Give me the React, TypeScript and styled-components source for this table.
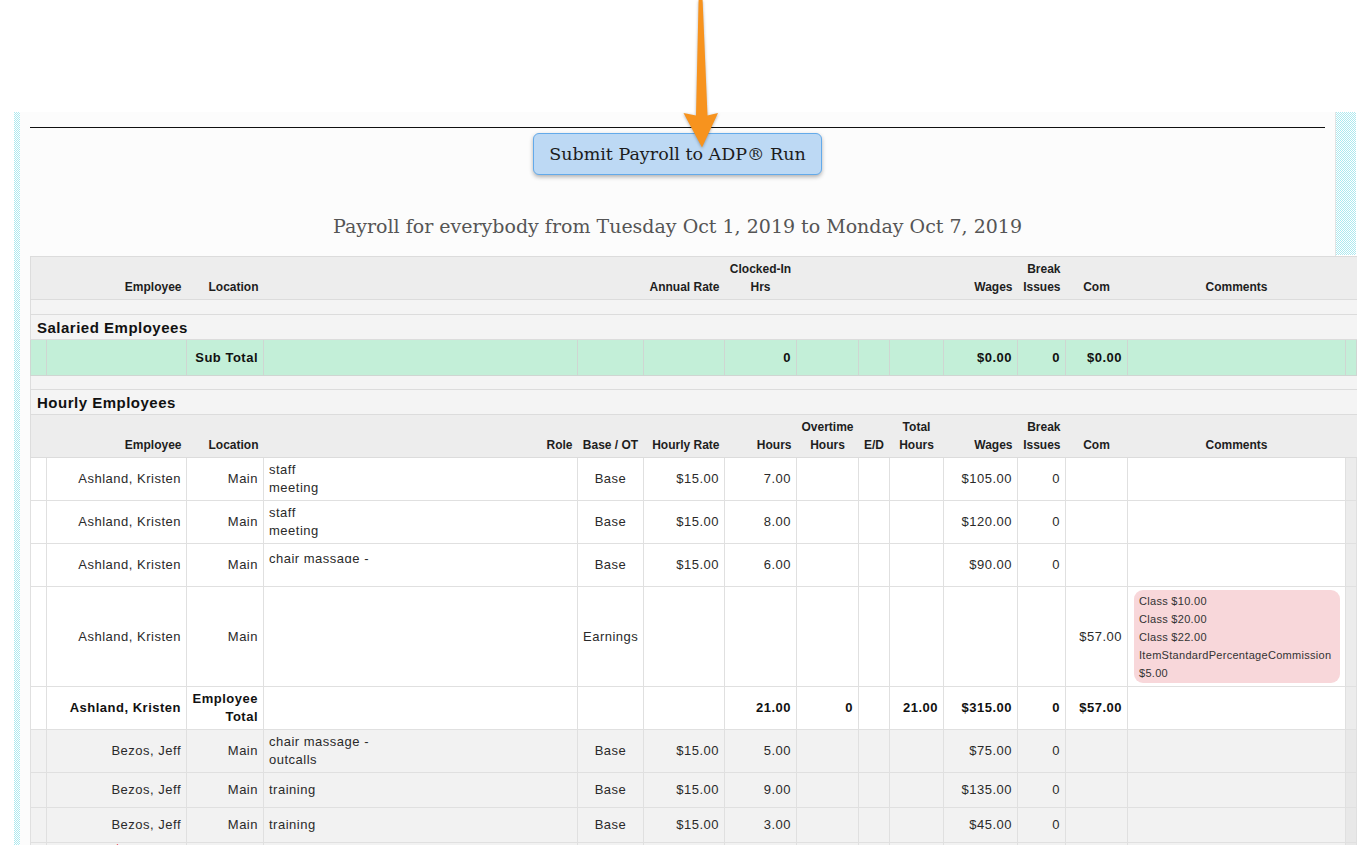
import React from 'react';
import styled, { createGlobalStyle } from 'styled-components';

const GlobalStyle = createGlobalStyle`
  html, body { margin: 0; padding: 0; background: #fff; }
  body { font-family: "Liberation Sans", Arial, sans-serif; color: #222; }
`;

const Page = styled.div`
  position: relative;
  width: 1371px;
  height: 865px;
  overflow: hidden;
  background: #fff;
`;

const TopSpace = styled.div`
  height: 112px;
`;

const ArrowMark = styled.svg`
  position: absolute;
  left: 683px;
  top: 0;
  filter: drop-shadow(0 1px 1.5px rgba(0, 0, 0, 0.3));
  z-index: 2;
`;

const Frame = styled.div`
  display: flex;
  align-items: flex-start;
  height: 733px;
  overflow: hidden;
  padding-left: 14px;
`;

const StripSvg = styled.svg`
  display: block;
  flex: none;
  shape-rendering: crispEdges;
`;

const DotStrip = ({ id, w, h }: { id: string; w: number; h: number }) => (
  <StripSvg width={w} height={h}>
    <defs>
      <pattern id={id} width="2" height="2" patternUnits="userSpaceOnUse">
        <rect x="0" y="0" width="2" height="2" fill="#ffffff" />
        <rect x="0" y="0" width="1" height="1" fill="#ade9ef" />
        <rect x="1" y="1" width="1" height="1" fill="#ade9ef" />
      </pattern>
    </defs>
    <rect x="0" y="0" width={w} height={h} fill={`url(#${id})`} />
  </StripSvg>
);

const Panel = styled.div`
  width: 1316px;
  flex: none;
  align-self: stretch;
  box-sizing: border-box;
  background: #fcfcfc;
  border-right: 1px solid #e4e4e4;
  padding: 15px 10px 0;
`;

const Rule = styled.div`
  height: 1px;
  background: #111;
`;

const ButtonRow = styled.div`
  display: flex;
  justify-content: center;
  margin-top: 5px;
`;

const SubmitButton = styled.button`
  width: 289px;
  height: 42px;
  box-sizing: border-box;
  background: #bdd9f4;
  border: 1px solid #63aaea;
  border-radius: 6px;
  box-shadow: 0 2px 4px rgba(0, 0, 0, 0.3);
  font-family: "DejaVu Serif", "Liberation Serif", serif;
  font-size: 17.5px;
  color: #1c1c1c;
  padding: 0;
  cursor: pointer;
`;

const Title = styled.h2`
  margin: 40px 0 19px;
  text-align: center;
  font-family: "DejaVu Serif", "Liberation Serif", serif;
  font-weight: 400;
  font-size: 19px;
  line-height: 22px;
  color: #555;
`;

const Table = styled.table`
  width: 1326px;
  table-layout: fixed;
  border-collapse: collapse;
  border-left: 1px solid #ddd;
`;

type Tone = 'head' | 'band' | 'green' | 'white' | 'grey';

const toneBg: Record<Tone, string> = {
  head: '#ededed',
  band: '#f4f4f4',
  green: '#c3efd8',
  white: '#ffffff',
  grey: '#f2f2f2',
};

const Row = styled.tr<{ $h: number; $tone: Tone }>`
  height: ${(p) => p.$h}px;
  background: ${(p) => toneBg[p.$tone]};
`;

const HeadCell = styled.th<{ $align?: string }>`
  padding: 0 5px 3px;
  vertical-align: bottom;
  text-align: ${(p) => p.$align || 'right'};
  font-size: 12px;
  font-weight: 700;
  line-height: 18px;
  color: #1e1e1e;
  border-top: 1px solid #dcdcdc;
  border-bottom: 1px solid #dcdcdc;
  white-space: nowrap;
`;

const BandCell = styled.td`
  padding: 0 6px;
  font-size: 15px;
  font-weight: 700;
  letter-spacing: 0.5px;
  color: #111;
  text-align: left;
  border-top: 1px solid #dcdcdc;
  border-bottom: 1px solid #dcdcdc;
`;

const Cell = styled.td<{ $align?: string; $bold?: boolean; $edge?: Tone; $top?: boolean; $line?: string }>`
  padding: 0 5px;
  text-align: ${(p) => p.$align || 'right'};
  vertical-align: ${(p) => (p.$top ? 'top' : 'middle')};
  font-size: 13px;
  letter-spacing: 0.5px;
  line-height: 18px;
  font-weight: ${(p) => (p.$bold ? 700 : 400)};
  color: ${(p) => (p.$bold ? '#111' : '#2a2a2a')};
  border: 1px solid ${(p) => p.$line || '#e0e0e0'};
  white-space: nowrap;
  overflow: hidden;
  background: ${(p) =>
    p.$edge === 'white' ? '#ececec' : p.$edge === 'grey' ? '#e8e8e8' : 'transparent'};
`;

const RoleClip = styled.div`
  height: 12px;
  overflow: hidden;
  line-height: 16px;
  margin-bottom: 16px;
`;

const Note = styled.div`
  background: #f8d7da;
  border-radius: 9px;
  padding: 2px 5px 1px;
  font-size: 11px;
  line-height: 18px;
  letter-spacing: 0.3px;
  color: #333;
  text-align: left;
  white-space: nowrap;
  overflow: hidden;
`;

const NoteCell = styled(Cell)`
  padding: 0 5px 0 6px;
`;

const NoRole = styled.span`
  display: block;
  margin: 0 0 0 39px;
  text-align: left;
  font-size: 9px;
  line-height: 10px;
  letter-spacing: 0;
  color: #e8202a;
`;

const widths = [16, 140, 77, 314, 66, 81, 72, 62, 31, 54, 74, 48, 62, 218, 11];

type DataRow = {
  name: string;
  loc: React.ReactNode;
  role?: React.ReactNode;
  base?: string;
  rate?: string;
  hours?: string;
  ot?: string;
  total?: string;
  wages?: string;
  brk?: string;
  com?: string;
  note?: string[];
  h: number;
  tone: Tone;
  bold?: boolean;
};

const Lines = ({ items }: { items: string[] }) => (
  <>
    {items.map((t, i) => (
      <div key={i}>{t}</div>
    ))}
  </>
);

const rows: DataRow[] = [
  { name: 'Ashland, Kristen', loc: 'Main', role: <Lines items={['staff', 'meeting']} />, base: 'Base', rate: '$15.00', hours: '7.00', wages: '$105.00', brk: '0', h: 43, tone: 'white' },
  { name: 'Ashland, Kristen', loc: 'Main', role: <Lines items={['staff', 'meeting']} />, base: 'Base', rate: '$15.00', hours: '8.00', wages: '$120.00', brk: '0', h: 43, tone: 'white' },
  { name: 'Ashland, Kristen', loc: 'Main', role: <RoleClip>chair massage -</RoleClip>, base: 'Base', rate: '$15.00', hours: '6.00', wages: '$90.00', brk: '0', h: 43, tone: 'white' },
  { name: 'Ashland, Kristen', loc: 'Main', base: 'Earnings', com: '$57.00', note: ['Class $10.00', 'Class $20.00', 'Class $22.00', 'ItemStandardPercentageCommission', '$5.00'], h: 100, tone: 'white' },
  { name: 'Ashland, Kristen', loc: <Lines items={['Employee', 'Total']} />, hours: '21.00', ot: '0', total: '21.00', wages: '$315.00', brk: '0', com: '$57.00', h: 43, tone: 'white', bold: true },
  { name: 'Bezos, Jeff', loc: 'Main', role: <Lines items={['chair massage -', 'outcalls']} />, base: 'Base', rate: '$15.00', hours: '5.00', wages: '$75.00', brk: '0', h: 43, tone: 'grey' },
  { name: 'Bezos, Jeff', loc: 'Main', role: 'training', base: 'Base', rate: '$15.00', hours: '9.00', wages: '$135.00', brk: '0', h: 35, tone: 'grey' },
  { name: 'Bezos, Jeff', loc: 'Main', role: 'training', base: 'Base', rate: '$15.00', hours: '3.00', wages: '$45.00', brk: '0', h: 35, tone: 'grey' },
];

const Arrow = () => (
  <ArrowMark width="36" height="150" viewBox="0 0 36 150">
    <path d="M15.6 0 L19.6 0 L24.5 115.5 L35 113 L19 147.5 L0.5 113 L13 115.5 Z" fill="#f7931e" />
  </ArrowMark>
);

const greenLine = '#cfd6d2';

export default function App() {
  return (
    <Page>
      <GlobalStyle />
      <Arrow />
      <TopSpace />
      <Frame>
        <DotStrip id="dots-left" w={6} h={733} />
        <Panel>
          <Rule />
          <ButtonRow>
            <SubmitButton>Submit Payroll to ADP® Run</SubmitButton>
          </ButtonRow>
          <Title>Payroll for everybody from Tuesday Oct 1, 2019 to Monday Oct 7, 2019</Title>
          <Table>
            <colgroup>
              {widths.map((w, i) => (
                <col key={i} style={{ width: w }} />
              ))}
            </colgroup>
            <tbody>
              <Row $h={43} $tone="head">
                <HeadCell />
                <HeadCell>Employee</HeadCell>
                <HeadCell>Location</HeadCell>
                <HeadCell />
                <HeadCell />
                <HeadCell>Annual Rate</HeadCell>
                <HeadCell $align="center">Clocked-In<br />Hrs</HeadCell>
                <HeadCell />
                <HeadCell />
                <HeadCell />
                <HeadCell>Wages</HeadCell>
                <HeadCell>Break<br />Issues</HeadCell>
                <HeadCell $align="center">Com</HeadCell>
                <HeadCell $align="center">Comments</HeadCell>
                <HeadCell />
              </Row>
              <Row $h={15} $tone="band">
                <BandCell colSpan={15} />
              </Row>
              <Row $h={25} $tone="band">
                <BandCell colSpan={15}>Salaried Employees</BandCell>
              </Row>
              <Row $h={36} $tone="green">
                <Cell $line={greenLine} />
                <Cell $line={greenLine} />
                <Cell $line={greenLine} $bold>Sub Total</Cell>
                <Cell $line={greenLine} />
                <Cell $line={greenLine} />
                <Cell $line={greenLine} />
                <Cell $line={greenLine} $bold>0</Cell>
                <Cell $line={greenLine} />
                <Cell $line={greenLine} />
                <Cell $line={greenLine} />
                <Cell $line={greenLine} $bold>$0.00</Cell>
                <Cell $line={greenLine} $bold>0</Cell>
                <Cell $line={greenLine} $bold>$0.00</Cell>
                <Cell $line={greenLine} />
                <Cell $line={greenLine} />
              </Row>
              <Row $h={14} $tone="band">
                <BandCell colSpan={15} />
              </Row>
              <Row $h={25} $tone="band">
                <BandCell colSpan={15}>Hourly Employees</BandCell>
              </Row>
              <Row $h={43} $tone="head">
                <HeadCell />
                <HeadCell>Employee</HeadCell>
                <HeadCell>Location</HeadCell>
                <HeadCell>Role</HeadCell>
                <HeadCell $align="center">Base / OT</HeadCell>
                <HeadCell>Hourly Rate</HeadCell>
                <HeadCell>Hours</HeadCell>
                <HeadCell $align="center">Overtime<br />Hours</HeadCell>
                <HeadCell $align="center">E/D</HeadCell>
                <HeadCell $align="center">Total<br />Hours</HeadCell>
                <HeadCell>Wages</HeadCell>
                <HeadCell>Break<br />Issues</HeadCell>
                <HeadCell $align="center">Com</HeadCell>
                <HeadCell $align="center">Comments</HeadCell>
                <HeadCell />
              </Row>
              {rows.map((r, i) => (
                <Row key={i} $h={r.h} $tone={r.tone}>
                  <Cell />
                  <Cell $bold={r.bold}>{r.name}</Cell>
                  <Cell $bold={r.bold}>{r.loc}</Cell>
                  <Cell $align="left">{r.role}</Cell>
                  <Cell $align="center">{r.base}</Cell>
                  <Cell>{r.rate}</Cell>
                  <Cell $bold={r.bold}>{r.hours}</Cell>
                  <Cell $bold={r.bold}>{r.ot}</Cell>
                  <Cell />
                  <Cell $bold={r.bold}>{r.total}</Cell>
                  <Cell $bold={r.bold}>{r.wages}</Cell>
                  <Cell $bold={r.bold}>{r.brk}</Cell>
                  <Cell $bold={r.bold}>{r.com}</Cell>
                  {r.note ? (
                    <NoteCell>
                      <Note>
                        {r.note.map((n, j) => (
                          <div key={j}>{n}</div>
                        ))}
                      </Note>
                    </NoteCell>
                  ) : (
                    <Cell />
                  )}
                  <Cell $edge={r.tone} />
                </Row>
              ))}
              <Row $h={43} $tone="grey">
                <Cell />
                <Cell $top>
                  <NoRole>No Role</NoRole>
                </Cell>
                <Cell />
                <Cell />
                <Cell />
                <Cell />
                <Cell />
                <Cell />
                <Cell />
                <Cell />
                <Cell />
                <Cell />
                <Cell />
                <Cell />
                <Cell $edge="grey" />
              </Row>
            </tbody>
          </Table>
        </Panel>
        <DotStrip id="dots-right" w={20} h={143} />
      </Frame>
    </Page>
  );
}
